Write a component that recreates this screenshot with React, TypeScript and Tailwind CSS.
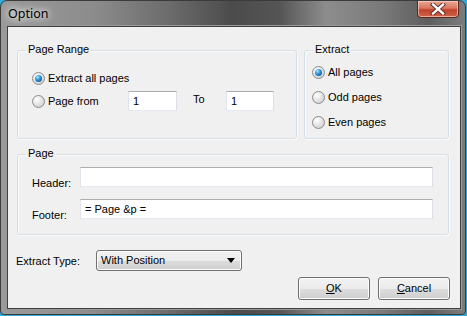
import React from "react";

const font = { fontFamily: '"Liberation Sans", Arial, sans-serif' };

function Radio({ checked }: { checked?: boolean }) {
  return (
    <span className="relative inline-flex w-[13px] h-[13px] shrink-0 rounded-full border border-[#8b8b8b] items-center justify-center bg-[radial-gradient(circle_at_35%_30%,#ffffff_0%,#e6e6e6_45%,#c6c6c6_100%)]">
      {checked && (
        <span className="block w-[7px] h-[7px] rounded-full bg-[radial-gradient(circle_at_35%_30%,#9ee6ff_0%,#2b8fd6_45%,#0b3f7a_100%)]" />
      )}
    </span>
  );
}

function TextBox({ w, value }: { w: string; value?: string }) {
  return (
    <div
      className={`${w} h-[20px] bg-white border border-t-[#abadb3] border-l-[#e2e3ea] border-r-[#dbdfe6] border-b-[#e3e9ef] flex items-center pl-[4px] text-[11px] text-black`}
    >
      {value}
    </div>
  );
}

function Group({
  label,
  className,
  children,
}: {
  label: string;
  className: string;
  children?: React.ReactNode;
}) {
  return (
    <div
      className={`relative border border-[#d5dfe5] rounded-[3px] [box-shadow:inset_1px_1px_0_#fbfbfb,1px_1px_0_#fbfbfb] ${className}`}
    >
      <span className="absolute left-[8px] top-[-8px] px-[2px] bg-[#f0f0f0] text-[11px] leading-[13px] text-black">
        {label}
      </span>
      {children}
    </div>
  );
}

function Button({ children }: { children: React.ReactNode }) {
  return (
    <div className="w-[72px] h-[23px] rounded-[3px] border border-[#707070] flex items-center justify-center text-[11px] text-black [box-shadow:inset_0_0_0_1px_#fcfcfc] bg-[linear-gradient(to_bottom,#f2f2f2_0%,#ebebeb_50%,#dddddd_51%,#cfcfcf_100%)]">
      {children}
    </div>
  );
}

export default function App() {
  return (
    <div style={font} className="w-[467px] h-[316px] bg-[#2fa9dc]">
      <div className="w-[466px] h-[315px] rounded-t-[7px] rounded-b-[4px] border border-[#3b3b3b] bg-[linear-gradient(to_right,#9a9a9a_0%,#8c8c8c_20%,#6e6e6e_35%,#4b4b4b_50%,#555555_60%,#8d8d8d_70%,#7a7a7a_82%,#5e5e5e_92%,#7c7c7c_100%)] flex flex-col pl-[6px] pr-[5px] overflow-hidden">
        {/* Title bar */}
        <div className="h-[25px] flex items-start justify-between shrink-0">
          <span
            className="mt-[5px] ml-[1px] text-[12.5px] leading-[16px] text-black [text-shadow:0_0_6px_#ffffff,0_0_10px_#ffffff]"
            style={{ fontFamily: '"Noto Sans", "Open Sans", sans-serif' }}
          >
            Option
          </span>
          <div className="w-[42px] h-[18px] mt-[-1px] mr-[1px] rounded-b-[4px] border border-[#5a2a20] flex items-center justify-center bg-[linear-gradient(to_bottom,#e9a795_0%,#d8775f_45%,#c0432a_55%,#d0634a_100%)] [box-shadow:inset_0_0_0_1px_rgba(255,220,210,0.6)]">
            <svg width="16" height="12" viewBox="0 0 16 12">
              <path
                d="M3 1.5 L13 10.5 M13 1.5 L3 10.5"
                stroke="#5a2a20"
                strokeWidth="4.2"
                strokeLinecap="square"
              />
              <path
                d="M3 1.5 L13 10.5 M13 1.5 L3 10.5"
                stroke="#ffffff"
                strokeWidth="2.4"
                strokeLinecap="square"
              />
            </svg>
          </div>
        </div>

        {/* Client area */}
        <div className="w-[454px] h-[283px] border border-[#3f3f3f] bg-[#f0f0f0] flex flex-col text-[11px] text-black [box-shadow:0_0_0_1px_#9a9a9a]">
          <div className="flex gap-[7px] ml-[9px] mt-[23px]">
            <Group label="Page Range" className="w-[280px] h-[89px]">
              <div className="flex flex-col pl-[14px] pt-[21px] gap-[6px]">
                <div className="flex items-center gap-[3px] h-[13px]">
                  <Radio checked />
                  <span>Extract all pages</span>
                </div>
                <div className="flex items-center h-[20px]">
                  <div className="w-[96px] flex items-center gap-[3px]">
                    <Radio />
                    <span>Page from</span>
                  </div>
                  <TextBox w="w-[49px]" value="1" />
                  <span className="ml-[16px] w-[33px] mt-[-4px]">To</span>
                  <TextBox w="w-[48px]" value="1" />
                </div>
              </div>
            </Group>
            <Group label="Extract" className="w-[145px] h-[89px]">
              <div className="flex flex-col pl-[7px] pt-[15px] gap-[12px]">
                <div className="flex items-center gap-[3px] h-[13px]">
                  <Radio checked />
                  <span>All pages</span>
                </div>
                <div className="flex items-center gap-[3px] h-[13px]">
                  <Radio />
                  <span>Odd pages</span>
                </div>
                <div className="flex items-center gap-[3px] h-[13px]">
                  <Radio />
                  <span>Even pages</span>
                </div>
              </div>
            </Group>
          </div>

          <Group label="Page" className="w-[432px] h-[81px] ml-[9px] mt-[15px]">
            <div className="flex flex-col pt-[12px] gap-[12px]">
              <div className="flex items-end h-[20px]">
                <span className="w-[62px] pl-[14px] mb-[-4px]">Header:</span>
                <TextBox w="w-[353px]" />
              </div>
              <div className="flex items-end h-[20px]">
                <span className="w-[62px] pl-[14px] mb-[-4px]">Footer:</span>
                <TextBox w="w-[353px]" value="= Page &p =" />
              </div>
            </div>
          </Group>

          <div className="flex items-center mt-[15px] ml-[8px] h-[21px]">
            <span className="w-[80px] mt-[1px]">Extract Type:</span>
            <div className="w-[146px] h-[21px] rounded-[3px] border border-[#707070] flex items-center justify-between pl-[4px] pr-[6px] [box-shadow:inset_0_0_0_1px_#fcfcfc] bg-[linear-gradient(to_bottom,#f2f2f2_0%,#ebebeb_50%,#dddddd_51%,#cfcfcf_100%)]">
              <span>With Position</span>
              <svg width="8" height="5" viewBox="0 0 8 5">
                <path d="M0 0 H8 L4 5 Z" fill="#000" />
              </svg>
            </div>
          </div>

          <div className="flex justify-end gap-[8px] mt-[6px] pr-[10px]">
            <Button>
              <span>
                <span className="underline">O</span>K
              </span>
            </Button>
            <Button>
              <span>
                <span className="underline">C</span>ancel
              </span>
            </Button>
          </div>
        </div>
      </div>
    </div>
  );
}
